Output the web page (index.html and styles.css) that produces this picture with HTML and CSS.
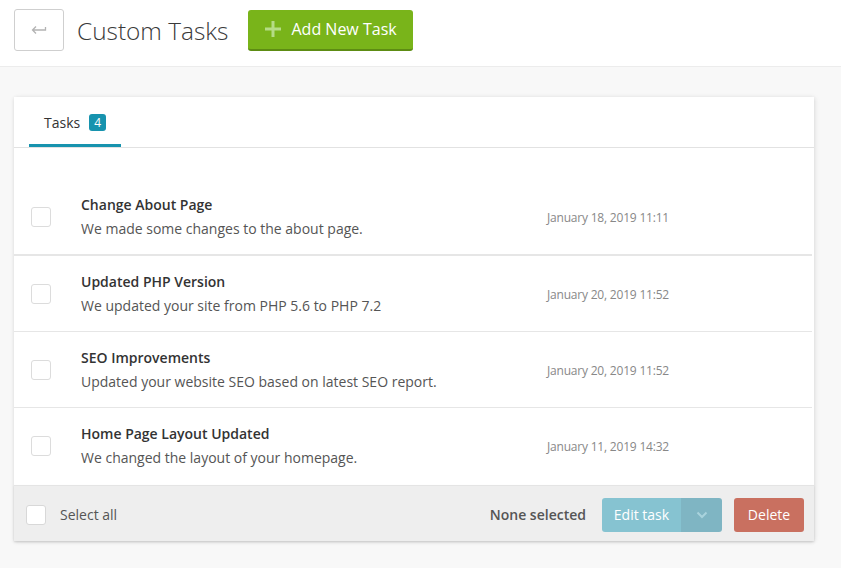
FILE: index.html
```html
<!DOCTYPE html>
<html lang="en">
<head>
    <meta charset="UTF-8">
    <title>Custom Tasks</title>
    <link rel="stylesheet" href="styles.css">
</head>
<body>

<header class="page-header">
    <button class="back-btn" aria-label="Back">
        <svg width="17" height="10" viewBox="0 0 17 10">
            <path d="M5 1.5 L1.5 5 L5 8.5 M1.5 5 H14.5 V2" fill="none" stroke="#b3b3b3" stroke-width="1.3"/>
        </svg>
    </button>
    <h1 class="page-title">Custom Tasks</h1>
    <button class="add-btn">
        <svg width="16" height="16" viewBox="0 0 16 16">
            <path d="M8 0 V16 M0 8 H16" stroke="#b5dc86" stroke-width="3"/>
        </svg>
        Add New Task
    </button>
</header>

<main class="content">
    <div class="card">
        <div class="tabs">
            <div class="tab active">Tasks <span class="badge">4</span></div>
        </div>

        <ul class="task-list">
            <li class="task first">
                <span class="check"></span>
                <div class="task-info">
                    <div class="task-title">Change About Page</div>
                    <div class="task-desc">We made some changes to the about page.</div>
                </div>
                <div class="task-date">January 18, 2019 11:11</div>
            </li>
            <li class="task">
                <span class="check"></span>
                <div class="task-info">
                    <div class="task-title">Updated PHP Version</div>
                    <div class="task-desc">We updated your site from PHP 5.6 to PHP 7.2</div>
                </div>
                <div class="task-date">January 20, 2019 11:52</div>
            </li>
            <li class="task">
                <span class="check"></span>
                <div class="task-info">
                    <div class="task-title">SEO Improvements</div>
                    <div class="task-desc">Updated your website SEO based on latest SEO report.</div>
                </div>
                <div class="task-date">January 20, 2019 11:52</div>
            </li>
            <li class="task">
                <span class="check"></span>
                <div class="task-info">
                    <div class="task-title">Home Page Layout Updated</div>
                    <div class="task-desc">We changed the layout of your homepage.</div>
                </div>
                <div class="task-date">January 11, 2019 14:32</div>
            </li>
        </ul>

        <div class="card-footer">
            <label class="select-all"><span class="check white"></span>Select all</label>
            <span class="selected-count">None selected</span>
            <div class="split-btn">
                <button class="edit-btn">Edit task</button>
                <button class="edit-toggle" aria-label="More">
                    <svg width="12" height="8" viewBox="0 0 12 8">
                        <path d="M1.5 1.5 L6 6 L10.5 1.5" fill="none" stroke="#a9d3dd" stroke-width="2"/>
                    </svg>
                </button>
            </div>
            <button class="delete-btn">Delete</button>
        </div>
    </div>
</main>

</body>
</html>
```

FILE: styles.css
```css
/* Reset */
* {
    margin: 0;
    padding: 0;
    box-sizing: border-box;
}

body {
    font-family: 'Open Sans', sans-serif;
    font-size: 14px;
    background-color: #f8f8f8;
    color: #333;
}

button {
    font-family: inherit;
    border: none;
    cursor: pointer;
}

/* Top header */
.page-header {
    display: flex;
    align-items: center;
    height: 67px;
    padding: 0 14px 6px;
    background-color: #fff;
    border-bottom: 1px solid #ececec;
}

.back-btn {
    width: 50px;
    height: 42px;
    background-color: #fff;
    border: 1px solid #cfcfcf;
    border-radius: 3px;
    display: flex;
    align-items: center;
    justify-content: center;
}

.page-title {
    font-size: 24.4px;
    font-weight: 300;
    color: #3a3a3a;
    margin: 0 20px 0 13px;
}

.add-btn {
    display: flex;
    align-items: center;
    gap: 10px;
    height: 41px;
    padding: 0 16px 0 17px;
    background-color: #79b41a;
    border-bottom: 2px solid #5d8c13;
    border-radius: 3px;
    color: #fff;
    font-size: 16px;
}

/* Main card */
.content {
    padding: 30px 14px;
}

.card {
    width: 800px;
    background-color: #fff;
    box-shadow: 0 1px 4px rgba(0, 0, 0, 0.12), 2px 0 6px rgba(0, 0, 0, 0.04);
}

.tabs {
    display: flex;
    height: 51px;
    padding: 0 15px;
    border-bottom: 1px solid #e2e2e2;
}

.tab {
    display: flex;
    align-items: center;
    gap: 9px;
    padding: 3px 15px 0;
    color: #333;
    border-bottom: 3px solid transparent;
}

.tab.active {
    border-bottom-color: #1793ae;
}

.badge {
    display: inline-flex;
    align-items: center;
    justify-content: center;
    width: 17px;
    height: 17px;
    border-radius: 3px;
    background-color: #1793ae;
    color: #fff;
    font-size: 12px;
}

/* Task rows */
.task-list {
    list-style: none;
    padding: 31px 0 2px;
}

.task {
    display: grid;
    grid-template-columns: 67px 466px 1fr;
    align-items: center;
    padding: 16px 0 15px;
    border-bottom: 1px solid #e6e6e6;
    margin-right: 2px;
}

.task.first {
    border-bottom-width: 2px;
}

.task:last-child {
    border-bottom: none;
}

.check {
    display: block;
    width: 20px;
    height: 20px;
    margin-left: 17px;
    border: 1px solid #dcdcdc;
    border-radius: 3px;
    background-color: #fff;
}

.task-title {
    font-weight: 600;
    line-height: 20px;
    color: #333;
}

.task-desc {
    margin-top: 4px;
    line-height: 20px;
    color: #555;
}

.task-date {
    font-size: 12px;
    letter-spacing: -0.2px;
    color: #888;
}

/* Footer bar */
.card-footer {
    display: flex;
    align-items: center;
    height: 56px;
    padding: 2px 10px 0 12px;
    background-color: #eee;
    border-top: 1px solid #e4e4e4;
    box-shadow: 0 1px 2px rgba(0, 0, 0, 0.1);
}

.select-all {
    display: flex;
    align-items: center;
    color: #555;
    margin-right: auto;
}

.select-all .check {
    margin: 0 14px 0 0;
    border-color: #d8d8d8;
}

.selected-count {
    font-weight: 600;
    color: #555;
    margin-right: 16px;
}

.split-btn {
    display: flex;
    height: 34px;
    border-radius: 3px;
    overflow: hidden;
    margin-right: 12px;
}

.edit-btn {
    width: 79px;
    background-color: #86c3d1;
    color: #fff;
    font-size: 14px;
}

.edit-toggle {
    width: 41px;
    background-color: #7fb5c3;
    display: flex;
    align-items: center;
    justify-content: center;
}

.delete-btn {
    height: 34px;
    width: 70px;
    border-radius: 3px;
    background-color: #c97060;
    color: #fff;
    font-size: 14px;
}
```
